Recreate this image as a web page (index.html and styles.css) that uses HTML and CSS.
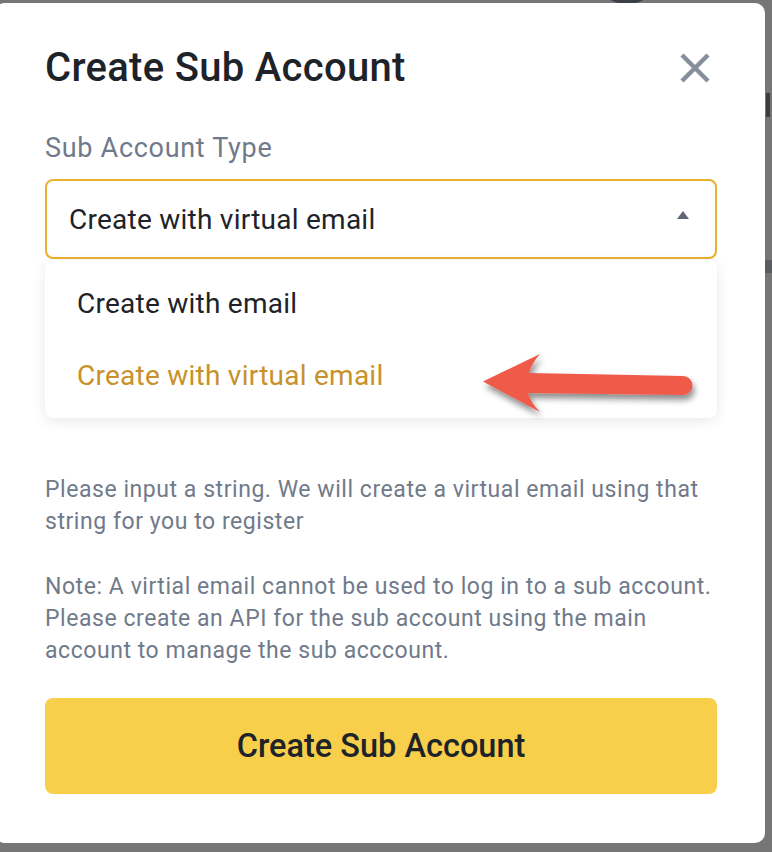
FILE: index.html
```html
<!DOCTYPE html>
<html lang="en">
<head>
<meta charset="utf-8">
<title>Create Sub Account</title>
<link rel="stylesheet" href="styles.css">
</head>
<body>
<div class="backdrop-bits">
  <span class="bit-ring"></span>
  <span class="bit-bar"></span>
  <span class="bit-band"></span>
</div>
<div class="modal">
  <div class="modal-header">
    <h1 class="modal-title">Create Sub Account</h1>
    <button class="close-btn" aria-label="Close">
      <svg width="30" height="30" viewBox="0 0 30 30"><path d="M2 2 L28 28 M28 2 L2 28" stroke="#868e9b" stroke-width="4.5" fill="none"/></svg>
    </button>
  </div>
  <div class="field-label">Sub Account Type</div>
  <div class="select-wrap">
    <div class="select">
      <span class="select-value">Create with virtual email</span>
      <svg class="caret" width="12" height="8" viewBox="0 0 12 8"><path d="M6 0 L12 8 L0 8 Z" fill="#5e6673"/></svg>
    </div>
    <ul class="dropdown">
      <li class="option">Create with email</li>
      <li class="option option-active">Create with virtual email</li>
    </ul>
  </div>
  <p class="hint hint-first">Please input a string. We will create a virtual email using that string for you to register</p>
  <p class="hint">Note: A virtial email cannot be used to log in to a sub account. Please create an API for the sub account using the main account to manage the sub acccount.</p>
  <button class="primary-btn">Create Sub Account</button>
</div>
<svg class="annotation" width="772" height="852" viewBox="0 0 772 852">
  <defs>
    <filter id="arrowShadow" x="-20%" y="-40%" width="140%" height="180%">
      <feDropShadow dx="2" dy="5" stdDeviation="3" flood-color="#000" flood-opacity="0.45"/>
    </filter>
  </defs>
  <path d="M483 381.5 L540 354 Q532 363 529 373 L683 376 A9.5 9.5 0 0 1 683 395 L528 393 Q531 403 540 412 Z" fill="#f05a4a" filter="url(#arrowShadow)"/>
</svg>
</body>
</html>
```
FILE: styles.css
```css
* { box-sizing: border-box; }
html, body { margin: 0; padding: 0; }
body {
  width: 772px;
  height: 852px;
  overflow: hidden;
  background: #767676;
  font-family: Roboto, "Noto Sans", "Liberation Sans", sans-serif;
  position: relative;
}
.backdrop-bits { position: absolute; inset: 0; }
.bit-ring {
  position: absolute;
  left: 592px; top: -66px;
  width: 70px; height: 70px;
  border: 4px solid #3b3f46;
  border-radius: 50%;
}
.bit-bar {
  position: absolute;
  left: 766px; top: 93px;
  width: 4px; height: 24px;
  background: #3a3d44;
}
.bit-band {
  position: absolute;
  left: 765px; top: 260px;
  width: 7px; height: 13px;
  background: #5a5c60;
}
.modal {
  position: relative;
  margin: 3px 0 0 -5px;
  width: 770px;
  height: 840px;
  background: #fff;
  border-radius: 10px;
  padding: 41px 48px 48px 50px;
}
.modal-header {
  display: flex;
  align-items: center;
  justify-content: space-between;
  height: 48px;
}
.modal-title {
  margin: 0;
  font-size: 40px;
  line-height: 48px;
  font-weight: 500;
  letter-spacing: 0.3px;
  color: #1e2329;
}
.close-btn {
  border: 0;
  background: none;
  padding: 0;
  margin-right: 7px;
  width: 30px;
  height: 30px;
  display: flex;
}
.field-label {
  margin-top: 40px;
  font-size: 27px;
  line-height: 32px;
  letter-spacing: 0.7px;
  color: #707a8a;
}
.select-wrap {
  position: relative;
  margin-top: 15px;
}
.select {
  height: 80px;
  border: 2px solid #eab12f;
  border-radius: 8px;
  display: flex;
  align-items: center;
  justify-content: space-between;
  padding: 0 26px 0 22px;
}
.select-value {
  font-size: 28px;
  letter-spacing: 0.25px;
  color: #1e2329;
}
.caret { display: block; margin-top: -8px; }
.dropdown {
  position: absolute;
  left: 0; right: 0;
  top: 81px;
  margin: 0;
  list-style: none;
  padding: 7px 0;
  background: #fff;
  border-radius: 8px;
  box-shadow: 0 3px 14px rgba(0, 0, 0, 0.09);
  z-index: 2;
}
.option {
  height: 72px;
  display: flex;
  align-items: center;
  padding-left: 32px;
  font-size: 28px;
  letter-spacing: 0.25px;
  color: #1e2329;
}
.option-active { color: #c8912a; }
.hint {
  margin: 33px 0 0;
  font-size: 23px;
  line-height: 32px;
  letter-spacing: 0.55px;
  color: #707a8a;
}
.hint-first { margin-top: 215px; }
.primary-btn {
  display: block;
  width: 100%;
  height: 96px;
  margin-top: 31px;
  border: 0;
  border-radius: 8px;
  background: #f7cf4b;
  font-family: inherit;
  font-size: 32.5px;
  font-weight: 500;
  color: #1e2329;
}
.annotation {
  position: absolute;
  left: 0; top: 0;
  pointer-events: none;
  z-index: 5;
}
```
